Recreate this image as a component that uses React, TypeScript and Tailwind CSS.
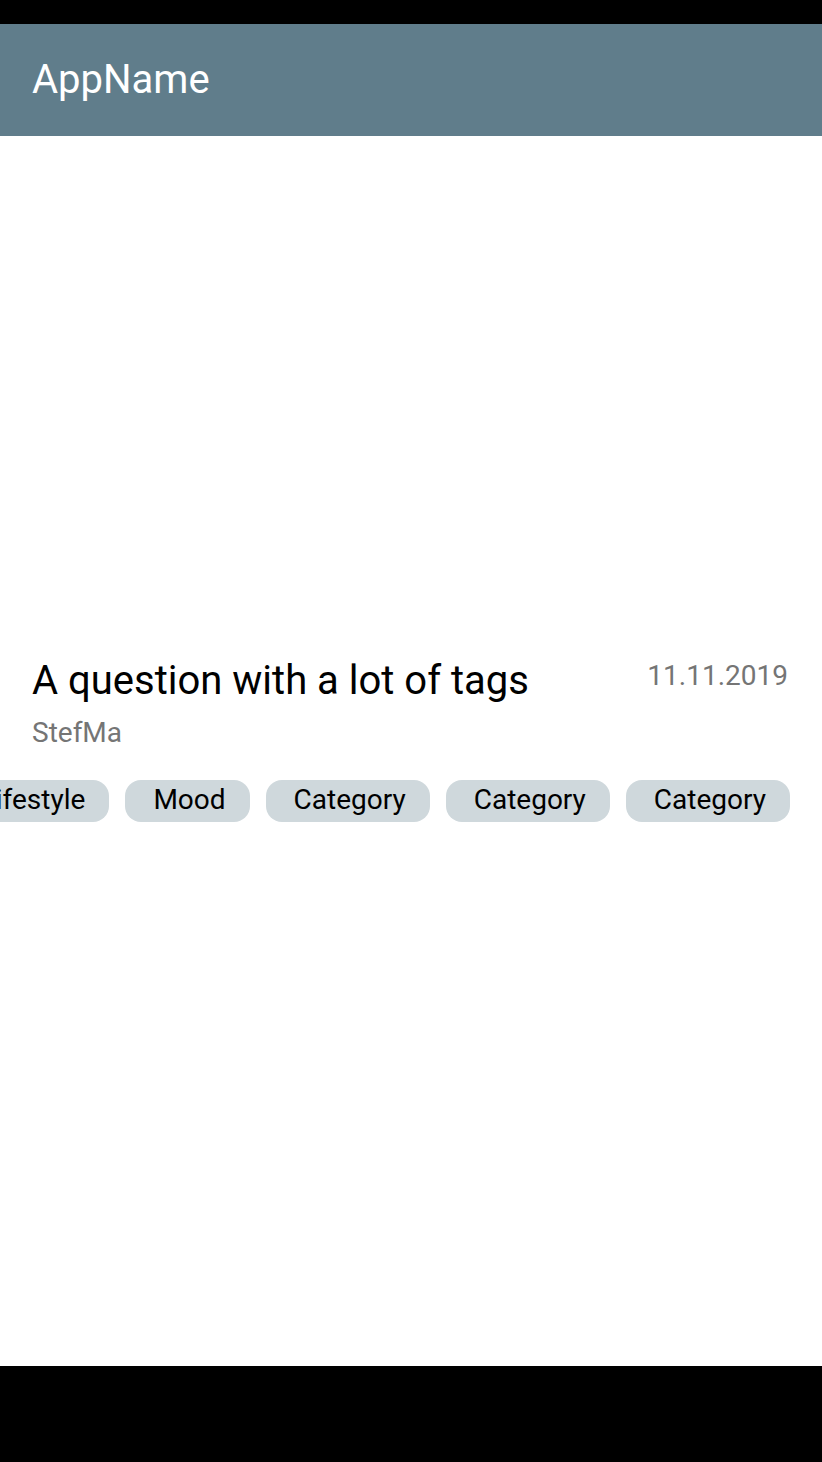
import React from 'react';

export default function App() {
  const tags = ['Android', 'Lifestyle', 'Mood', 'Category', 'Category', 'Category'];

  return (
    <div className="flex h-[1462px] w-full flex-col bg-white font-['Roboto',sans-serif]">
      <div className="h-6 shrink-0 bg-black" />

      <header className="flex h-[112px] shrink-0 items-center bg-[#607d8b] px-8">
        <h1 className="text-[40px] leading-none text-white">AppName</h1>
      </header>

      <main className="flex-1 pt-[521px]">
        <div className="flex items-start justify-between px-8">
          <div>
            <h2 className="text-[40px] leading-[47px] text-black">
              A question with a lot of tags
            </h2>
            <p className="mt-[12px] text-[28px] leading-[33px] text-[#757575]">
              StefMa
            </p>
          </div>
          <span className="mt-[2px] pr-[2px] text-[28px] leading-[33px] text-[#757575]">
            11.11.2019
          </span>
        </div>

        <div className="mt-[31px] flex justify-end gap-4 overflow-hidden pr-8">
          {tags.map((tag, i) =>
          <span
            key={i}
            className="flex h-[42px] shrink-0 items-center rounded-2xl bg-[#cfd8dc] pl-[28px] pr-[24px] pb-[2px] text-[28px] leading-none text-black">
              {tag}
            </span>
          )}
        </div>
      </main>

      <div className="h-[96px] shrink-0 bg-black" />
    </div>);

}
